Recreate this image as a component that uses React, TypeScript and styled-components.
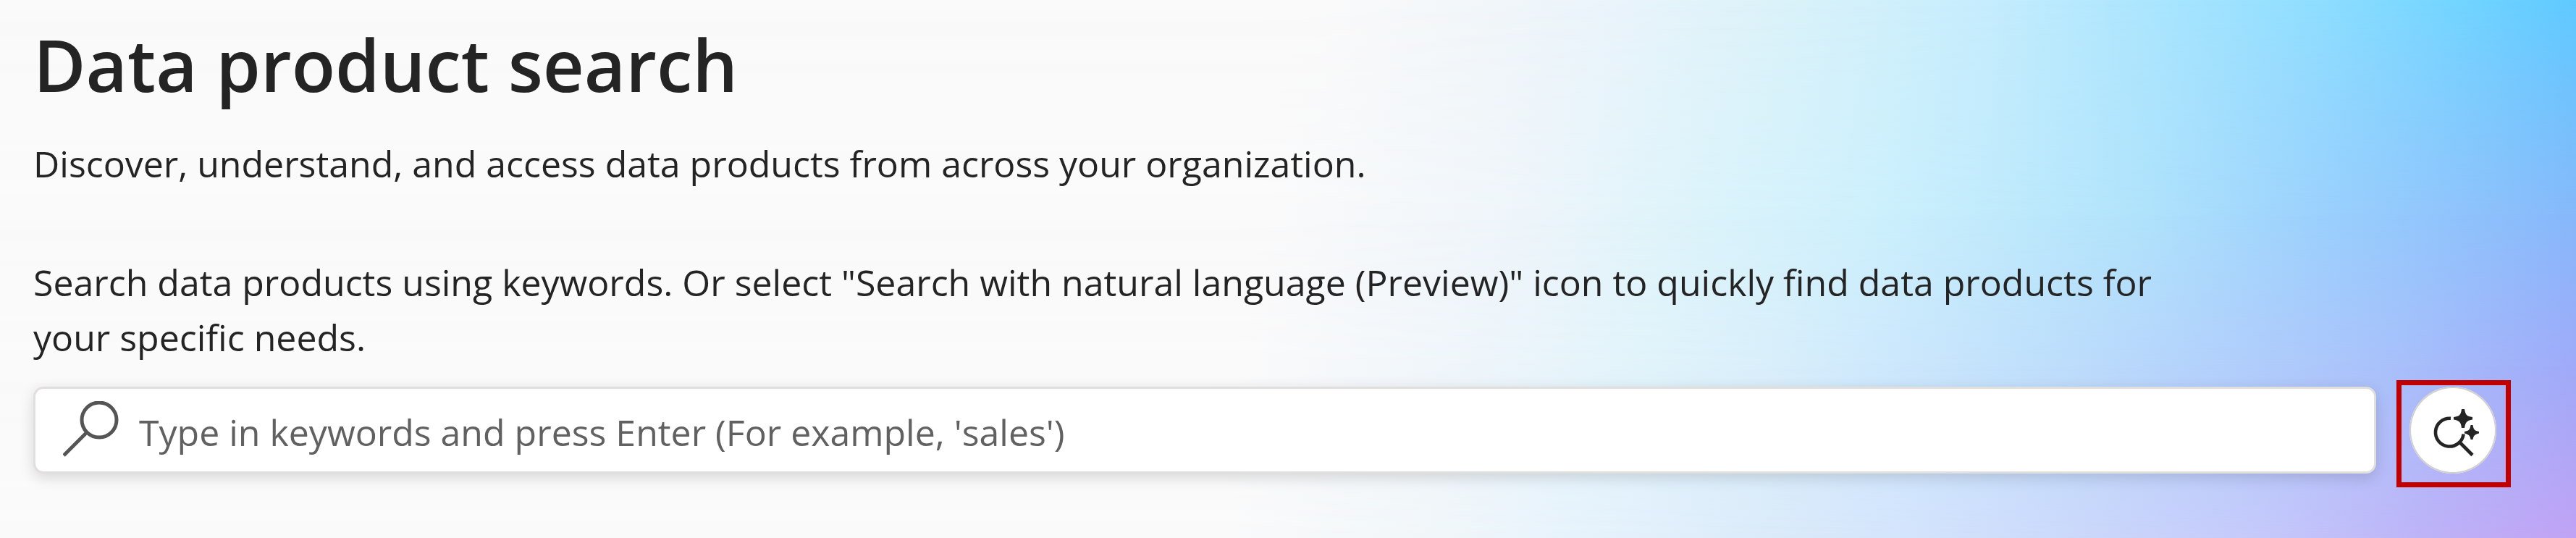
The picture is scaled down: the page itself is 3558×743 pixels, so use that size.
import React from 'react';
import styled, { createGlobalStyle } from 'styled-components';

const GlobalStyle = createGlobalStyle`
  * { box-sizing: border-box; }
  body { margin: 0; background: #fafafa; }
`;

const Hero = styled.main`
  position: relative;
  isolation: isolate;
  overflow: hidden;
  min-height: 100vh;
  padding: 20px 110px 72px 46px;
  color: #242424;
  font-family: 'Segoe UI', 'Open Sans', sans-serif;
`;

/* Horizontal colour bands; each fades in over the one before it. */
const Band = styled.div<{ $stops: string; $from: number; $to: number }>`
  position: absolute;
  inset: 0;
  z-index: -1;
  background: linear-gradient(to right, ${(p) => p.$stops});
  mask-image: linear-gradient(to bottom, transparent ${(p) => p.$from}%, #000 ${(p) => p.$to}%);
`;

const BANDS = [
  {
    from: -1,
    to: 0,
    stops: '#fafafa 51%, #f1f6f9 58%, #e9f4fb 63%, #dbf2f9 69%, #d0f0fb 73%, #c6edfd 77%, #a4e4fe 85%, #8edeff 90%, #74d6ff 95%, #5fcaff 100%',
  },
  {
    from: 0,
    to: 40,
    stops: '#fafafa 49%, #eef5fa 59%, #e0f4fa 64%, #ccf0fc 73%, #b0e3fb 83%, #98cefd 91%, #86b8fa 100%',
  },
  {
    from: 40,
    to: 68,
    stops: '#fafafa 48%, #eef5fa 57%, #e0f3fa 64%, #d8eefa 69%, #cde8fc 73%, #bfdffb 79%, #b2d0fb 86%, #a8c0fa 93%, #9faaf8 100%',
  },
  {
    from: 68,
    to: 100,
    stops: '#fafafa 47%, #f0f6f9 56%, #e6f3fc 61%, #daeaf9 69%, #d3e4fc 74%, #cad7fa 81%, #c4c8fa 88%, #bdb3f7 94%, #c0a2f4 100%',
  },
];

const Title = styled.h1`
  margin: 0 0 30px;
  font-size: 99px;
  font-weight: 600;
  line-height: 138px;
`;

const Copy = styled.p`
  max-width: 3000px;
  margin: 0 0 88px;
  font-size: 50px;
  line-height: 76px;
`;

const Hint = styled(Copy)`
  margin-bottom: 30px;
`;

const SearchRow = styled.form`
  display: flex;
  align-items: center;
  gap: 46px;
`;

const SearchBox = styled.label`
  display: flex;
  flex: 1;
  align-items: center;
  gap: 25px;
  height: 120px;
  padding: 0 38px;
  border: 3px solid #e1dfdd;
  border-radius: 14px;
  background: #fff;
  box-shadow: 0 6px 20px rgba(0, 0, 0, 0.14);
`;

const Input = styled.input`
  flex: 1;
  min-width: 0;
  padding: 6px 0 0;
  border: 0;
  outline: 0;
  background: none;
  color: #242424;
  font: inherit;
  font-size: 50px;
  line-height: 76px;
  &::placeholder { color: #616161; opacity: 1; }
`;

/* The red call-out frame lies over the page around the button. */
const Highlight = styled.div`
  position: relative;
  &::after {
    content: '';
    position: absolute;
    inset: -9px -20px -19px -18px;
    border: 7px solid #c00000;
    pointer-events: none;
  }
`;

const RoundButton = styled.button`
  display: block;
  width: 120px;
  height: 120px;
  padding: 0;
  border: 0;
  border-radius: 50%;
  background: #fff;
  box-shadow: inset 0 0 0 2px #d2d0ce;
  color: #242424;
`;

function SearchIcon() {
  return (
    <svg width="80" height="80" viewBox="0 0 80 80" fill="none" stroke="#555" strokeWidth="5" aria-hidden="true">
      <circle cx="50" cy="26" r="24" />
      <path d="M33 43 L1 75" />
    </svg>
  );
}

function SparkleSearchIcon() {
  return (
    <svg width="120" height="120" viewBox="0 0 120 120" fill="currentColor" aria-hidden="true">
      <path
        d="M57 43.8 A19.4 19.4 0 1 0 74.6 65.5 M69.5 77 L87 94.5"
        fill="none"
        stroke="currentColor"
        strokeWidth="4.6"
      />
      <path d="M72 31 H76 C77.5 39 79 41 87 42 V45.500 C79 47 77.5 49 76 57 H72 C71 49 69 47 61 45.500 V42 C69 41 71 39 72 31Z" />
      <path d="M84.5 53 H87.5 C88.5 59.5 90 61 96 62 V64.5 C90 66 88.5 67.5 87.5 73 H84.5 C83.5 67.5 82 66 76 64.5 V62 C82 61 83.5 59.5 84.5 53Z" />
    </svg>
  );
}

export default function App() {
  return (
    <Hero>
      <GlobalStyle />
      {BANDS.map((b) => (
        <Band key={b.from} $stops={b.stops} $from={b.from} $to={b.to} />
      ))}
      <Title>Data product search</Title>
      <Copy>Discover, understand, and access data products from across your organization.</Copy>
      <Hint>
        Search data products using keywords. Or select "Search with natural language (Preview)" icon to quickly find data products for your specific needs.
      </Hint>
      <SearchRow>
        <SearchBox>
          <SearchIcon />
          <Input aria-label="Search data products" placeholder="Type in keywords and press Enter (For example, 'sales')" />
        </SearchBox>
        <Highlight>
          <RoundButton type="button" aria-label="Search with natural language (Preview)">
            <SparkleSearchIcon />
          </RoundButton>
        </Highlight>
      </SearchRow>
    </Hero>
  );
}
